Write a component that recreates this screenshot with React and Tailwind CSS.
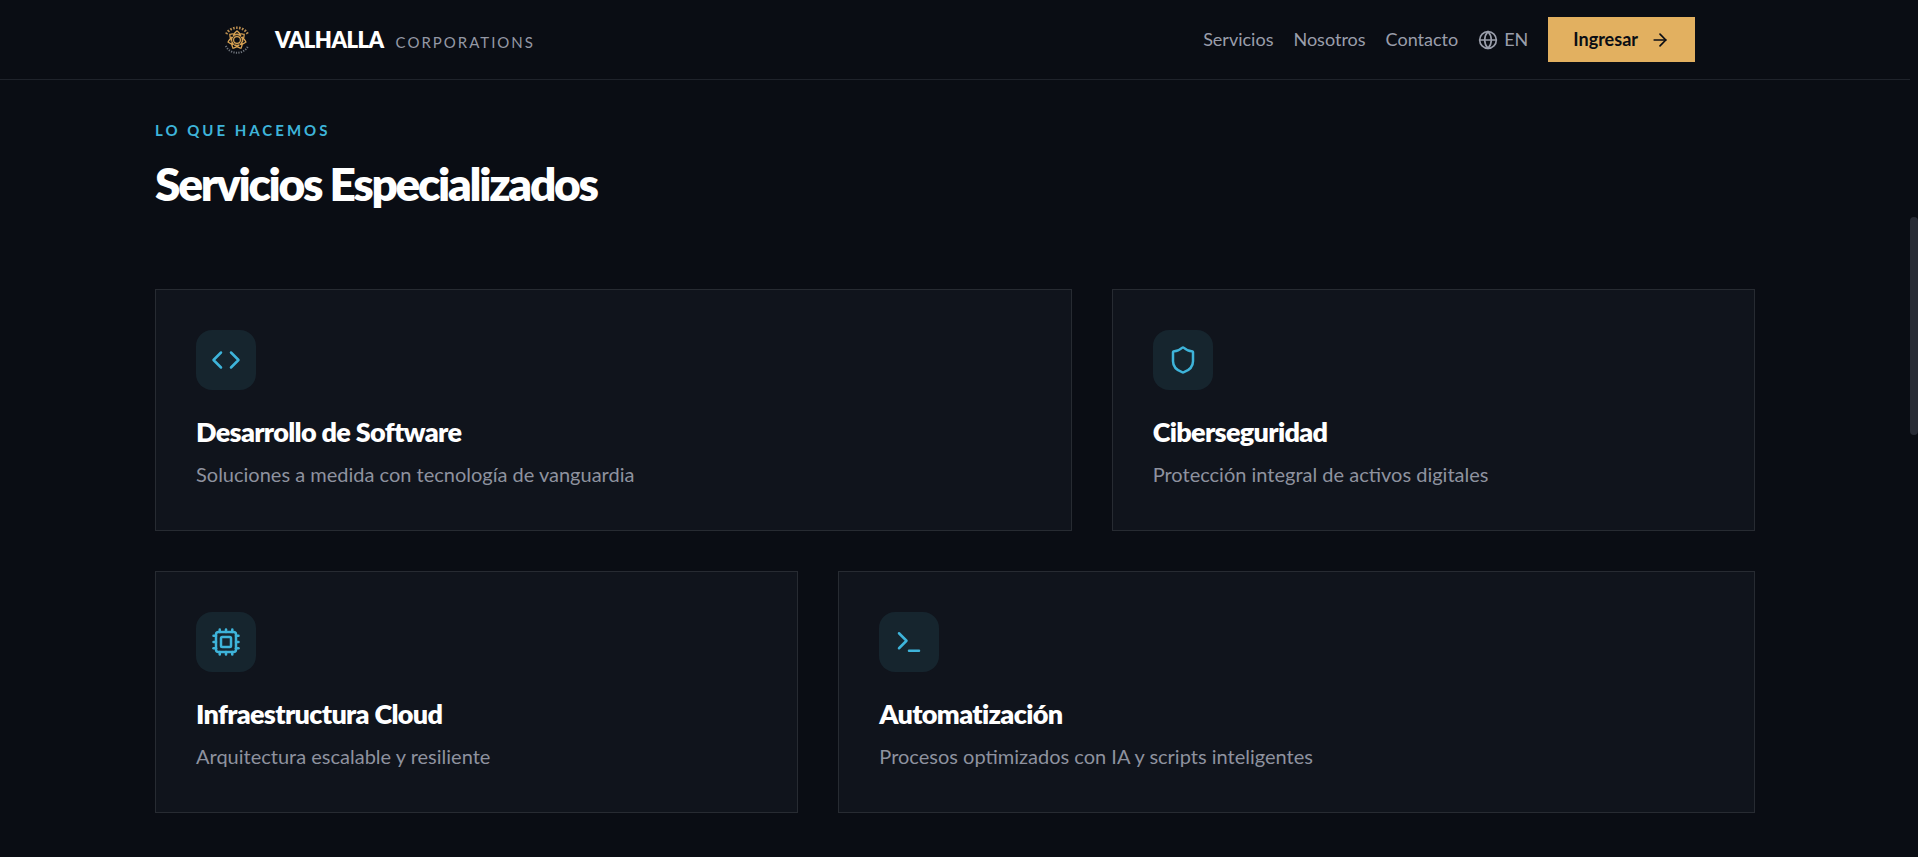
import React from 'react';
import { ArrowRight, Code, Cpu, Globe, Shield, Terminal } from 'lucide-react';

const navLinks = [
  { href: '#servicios', label: 'Servicios' },
  { href: '#nosotros', label: 'Nosotros' },
  { href: '#contacto', label: 'Contacto' },
];

const services = [
  {
    icon: Code,
    title: 'Desarrollo de Software',
    text: 'Soluciones a medida con tecnología de vanguardia',
    span: 'lg:col-span-7',
  },
  {
    icon: Shield,
    title: 'Ciberseguridad',
    text: 'Protección integral de activos digitales',
    span: 'lg:col-span-5',
  },
  {
    icon: Cpu,
    title: 'Infraestructura Cloud',
    text: 'Arquitectura escalable y resiliente',
    span: 'lg:col-span-5',
  },
  {
    icon: Terminal,
    title: 'Automatización',
    text: 'Procesos optimizados con IA y scripts inteligentes',
    span: 'lg:col-span-7',
  },
];

const petals = [0, 1, 2, 3, 4, 5, 6];

function Logo() {
  return (
    <svg viewBox="0 0 44 44" className="w-11 h-11" fill="none" aria-hidden="true">
      <g stroke="#d9a354" strokeWidth="1.2">
        {petals.map((i) => (
          <path
            key={i}
            d="M18.8 18.6C18 15.6 20.4 14.4 22 12.8C23.6 14.4 26 15.6 25.2 18.6"
            transform={`rotate(${(i * 360) / 7} 22 22)`}
          />
        ))}
        <circle cx="22" cy="22" r="5.8" strokeDasharray="2.2 1" />
        <circle cx="22" cy="22" r="3.4" />
      </g>
      <path d="M11.2 16A12.4 12.4 0 0 1 32.8 16" stroke="#b98d50" strokeWidth="2.6" strokeDasharray="1.6 1.4" />
      <path d="M10.8 28A12.6 12.6 0 0 0 33.2 28" stroke="#70757d" strokeWidth="2" strokeDasharray="1.2 1.3" />
    </svg>
  );
}

function Header() {
  return (
    <header className="border-b border-[#1f232b]">
      <div className="mx-auto flex h-[79px] max-w-[1600px] items-center justify-between px-15">
        <a href="#inicio" className="flex items-center gap-4">
          <Logo />
          <span className="flex items-baseline gap-3">
            <span className="text-[22px] font-extrabold tracking-tight text-white">VALHALLA</span>
            <span className="text-[15px] tracking-[2px] text-[#9498a5]">CORPORATIONS</span>
          </span>
        </a>
        <nav className="flex items-center gap-5 text-[18px] text-[#9a9eab]">
          {navLinks.map((link) => (
            <a key={link.href} href={link.href}>{link.label}</a>
          ))}
          <button type="button" className="flex items-center gap-1.5">
            <Globe className="w-5 h-5" /> EN
          </button>
          <button
            type="button"
            className="flex h-[45px] items-center gap-3 bg-[#e2b060] px-[25px] font-bold text-[#0a0d14]"
          >
            Ingresar <ArrowRight className="w-5 h-5" />
          </button>
        </nav>
      </div>
    </header>
  );
}

function ServiceCard({ icon: Icon, title, text, span }) {
  return (
    <article className={`border border-[#272b32] bg-[#10141c] p-10 ${span}`}>
      <div className="flex h-15 w-15 items-center justify-center rounded-2xl bg-[#16252e] text-[#3eb4da]">
        <Icon className="w-[30px] h-[30px]" strokeWidth={2} />
      </div>
      <h3 className="mt-6 text-[27px] leading-9 font-extrabold tracking-tight text-white">{title}</h3>
      <p className="mt-2 text-[20px] leading-8 text-[#8e929f]">{text}</p>
    </article>
  );
}

export default function App() {
  return (
    <div className="min-h-screen bg-[#0a0d14] pr-2 font-['Lato','Open_Sans',sans-serif]">
      <Header />
      <main className="mx-auto max-w-[1600px] pt-10 pb-11">
        <p className="text-[15px] leading-5 font-bold tracking-[3px] text-[#3eb4da]">LO QUE HACEMOS</p>
        <h2 className="mt-5 text-[46px] leading-12 font-extrabold tracking-tighter text-white">
          Servicios Especializados
        </h2>
        <div className="mt-[81px] grid grid-cols-1 gap-10 lg:grid-cols-12">
          {services.map((service) => (
            <ServiceCard key={service.title} {...service} />
          ))}
        </div>
      </main>
      <div className="fixed top-[217px] right-0 h-[218px] w-2 rounded-full bg-[#272b35]" />
    </div>
  );
}
